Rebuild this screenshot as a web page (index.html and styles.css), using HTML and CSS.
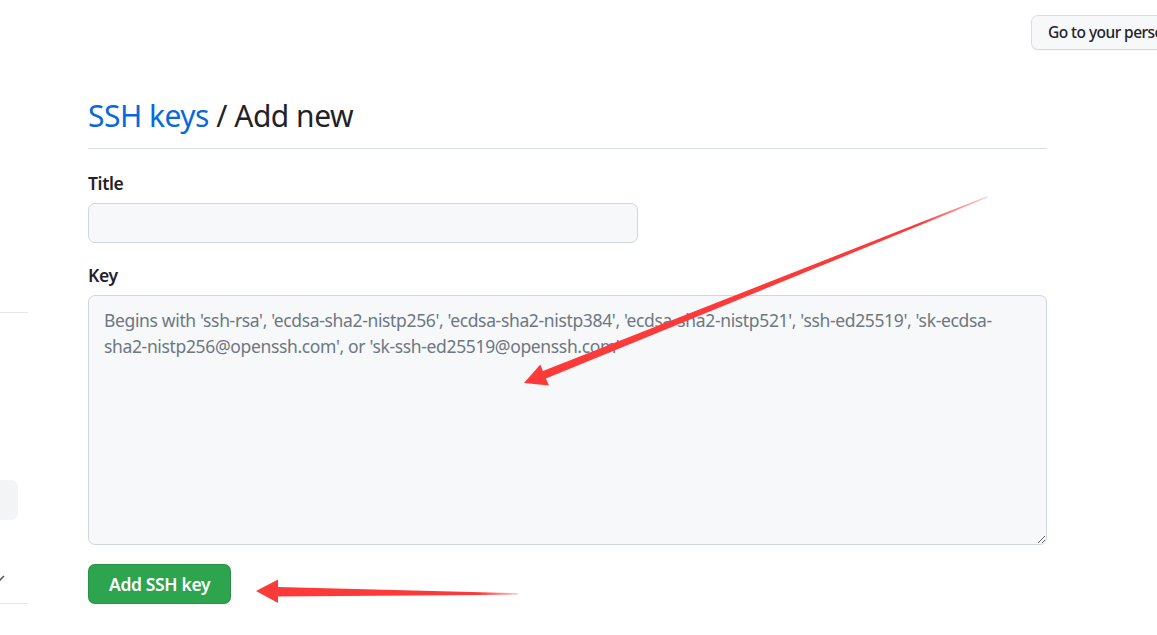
FILE: index.html
```html
<!DOCTYPE html>
<html lang="en">
<head>
<meta charset="utf-8">
<title>Add new SSH key</title>
<link rel="stylesheet" href="styles.css">
</head>
<body>
<div class="page">
  <header class="topbar">
    <button class="btn btn-outline" type="button">Go to your personal profile</button>
  </header>
  <div class="layout">
    <aside class="sidebar">
      <div class="side-rule side-rule-1"></div>
      <div class="side-item"></div>
      <div class="side-check">
        <svg width="8" height="8" viewBox="0 0 8 8"><path d="M0 7 L6 1" stroke="#57606a" stroke-width="1.6" fill="none"/></svg>
      </div>
      <div class="side-rule side-rule-2"></div>
    </aside>
    <main class="main">
      <div class="subhead">
        <h2 class="subhead-heading"><a href="#" class="link">SSH keys</a> / Add new</h2>
      </div>
      <form class="form">
        <div class="form-group">
          <label class="form-label" for="title">Title</label>
          <input id="title" class="form-control title-input" type="text">
        </div>
        <div class="form-group">
          <label class="form-label" for="key">Key</label>
          <textarea id="key" class="form-control key-input" placeholder="Begins with 'ssh-rsa', 'ecdsa-sha2-nistp256', 'ecdsa-sha2-nistp384', 'ecdsa-sha2-nistp521', 'ssh-ed25519', 'sk-ecdsa-sha2-nistp256@openssh.com', or 'sk-ssh-ed25519@openssh.com'"></textarea>
        </div>
        <button class="btn btn-primary" type="submit">Add SSH key</button>
      </form>
    </main>
  </div>
  <svg class="annotations" width="1157" height="635" viewBox="0 0 1157 635">
    <defs>
      <linearGradient id="fade1" gradientUnits="userSpaceOnUse" x1="524" y1="383" x2="990" y2="196">
        <stop offset="0" stop-color="#fd3a3a"/>
        <stop offset="0.85" stop-color="#fd3a3a"/>
        <stop offset="1" stop-color="#fd3a3a" stop-opacity="0.2"/>
      </linearGradient>
      <linearGradient id="fade2" gradientUnits="userSpaceOnUse" x1="256" y1="591" x2="518" y2="594">
        <stop offset="0" stop-color="#fd3a3a"/>
        <stop offset="0.85" stop-color="#fd3a3a"/>
        <stop offset="1" stop-color="#fd3a3a" stop-opacity="0.3"/>
      </linearGradient>
    </defs>
    <polygon fill="url(#fade1)" points="524,383 540.3,364.6 542.9,371.1 987,196.3 987.6,197.6 545.9,378.5 549,385.5"/>
    <polygon fill="url(#fade2)" points="256,591 278,579.5 278,587 518,593.3 518,594.6 278,596.5 278,603"/>
  </svg>
</div>
</body>
</html>
```

FILE: styles.css
```css
html, body {
  margin: 0;
  padding: 0;
  background: #ffffff;
  overflow: hidden;
}

body {
  font-family: "Noto Sans", "Liberation Sans", sans-serif;
  font-size: 17.5px;
  line-height: 1.5;
  letter-spacing: -0.35px;
  color: #1f2328;
}

.page {
  position: relative;
  width: 1157px;
  height: 635px;
  overflow: hidden;
}

.topbar {
  display: flex;
  padding: 15px 0 0 1031px;
  white-space: nowrap;
}

.btn {
  font-family: inherit;
  font-size: 17.5px;
  letter-spacing: -0.35px;
  border-radius: 7px;
  cursor: pointer;
  white-space: nowrap;
}

.btn-outline {
  flex: none;
  height: 35px;
  padding: 0 16px;
  background: #f6f8fa;
  border: 1px solid #d8dde3;
  color: #1f2328;
  font-size: 15.5px;
  font-weight: 500;
  letter-spacing: -0.55px;
  line-height: 33px;
  box-shadow: 0 1px 0 rgba(31, 35, 40, 0.04);
}

.layout {
  display: flex;
  gap: 60px;
}

.sidebar {
  width: 28px;
  flex: none;
  display: flex;
  flex-direction: column;
}

.side-rule {
  height: 1px;
  background: #e6e9ec;
  width: 28px;
}

.side-rule-1 {
  margin-top: 262px;
}

.side-item {
  margin-top: 167px;
  width: 18px;
  height: 40px;
  background: #f3f4f6;
  border-radius: 0 7px 7px 0;
}

.side-check {
  margin-top: 55px;
  height: 10px;
  margin-left: -2px;
}

.side-check svg {
  display: block;
}

.side-rule-2 {
  margin-top: 18px;
}

.main {
  width: 959px;
  flex: none;
}

.subhead {
  margin-top: 43px;
  padding-bottom: 10px;
  border-bottom: 1px solid #d8dee4;
}

.subhead-heading {
  margin: 0;
  font-size: 30px;
  font-weight: 400;
  line-height: 45px;
  letter-spacing: -0.5px;
  color: #1f2328;
}

.link {
  color: #0969da;
  text-decoration: none;
}

.form {
  display: flex;
  flex-direction: column;
  align-items: flex-start;
  padding-top: 21px;
}

.form-group {
  display: flex;
  flex-direction: column;
  align-items: flex-start;
  width: 100%;
  margin-bottom: 19px;
}

.form-label {
  font-weight: 600;
  font-size: 17.5px;
  line-height: 26px;
  margin-bottom: 7px;
}

.form-control {
  box-sizing: border-box;
  font-family: inherit;
  font-size: 17.5px;
  letter-spacing: -0.35px;
  background: #f6f8fa;
  border: 1px solid #d0d7de;
  border-radius: 7px;
  color: #1f2328;
  outline: none;
  margin: 0;
}

.title-input {
  width: 550px;
  height: 40px;
  padding: 0 15px;
}

.key-input {
  width: 959px;
  height: 250px;
  padding: 11px 15px;
  line-height: 26px;
  resize: vertical;
}

.key-input::placeholder {
  color: #6e7781;
  opacity: 1;
}

.btn-primary {
  height: 40px;
  padding: 0 20px;
  background: #2da44e;
  border: 1px solid rgba(27, 31, 36, 0.15);
  color: #ffffff;
  font-weight: 600;
  line-height: 38px;
}

.annotations {
  position: absolute;
  left: 0;
  top: 0;
  pointer-events: none;
}
```
